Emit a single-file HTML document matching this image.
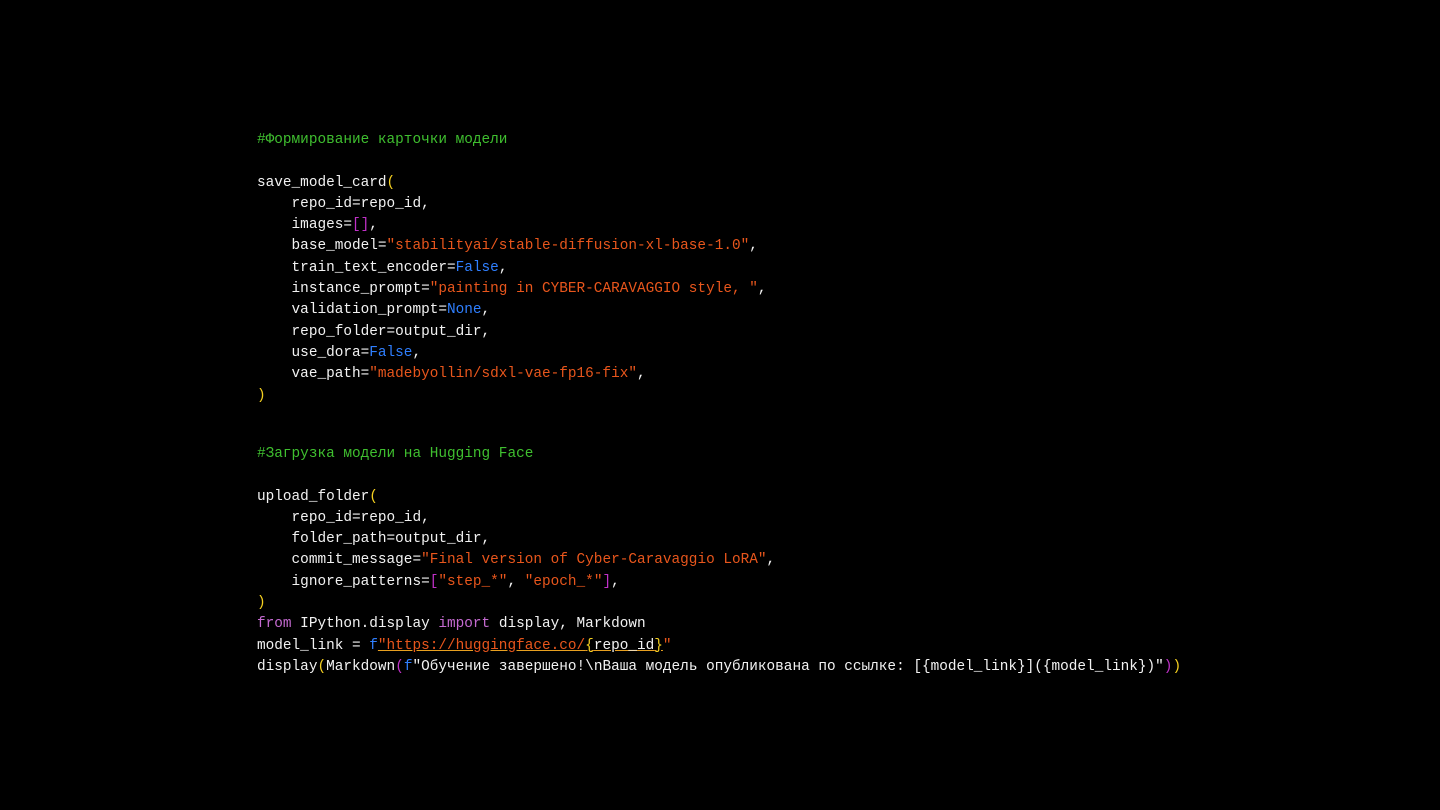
<!DOCTYPE html>
<html><head><meta charset="utf-8"><style>
html,body{margin:0;padding:0;background:#000;width:1440px;height:810px;overflow:hidden}
pre{position:absolute;left:257px;margin:0;font-family:"Liberation Mono","DejaVu Sans Mono",monospace;font-size:14.4px;line-height:21.3px;color:#f2f2f2;white-space:pre}
.c{color:#3fbf2f}.s{color:#e8561c}.k{color:#2f7fff}.y{color:#f5d020}.p{color:#c030c8}.m{color:#c46ad0}
.u{text-decoration:underline;text-decoration-color:#e8a020}
</style></head><body>
<pre style="top:130px"><span class="c">#Формирование карточки модели</span>

save_model_card<span class="y">(</span>
    repo_id=repo_id,
    images=<span class="p">[]</span>,
    base_model=<span class="s">"stabilityai/stable-diffusion-xl-base-1.0"</span>,
    train_text_encoder=<span class="k">False</span>,
    instance_prompt=<span class="s">"painting in CYBER-CARAVAGGIO style, "</span>,
    validation_prompt=<span class="k">None</span>,
    repo_folder=output_dir,
    use_dora=<span class="k">False</span>,
    vae_path=<span class="s">"madebyollin/sdxl-vae-fp16-fix"</span>,
<span class="y">)</span></pre>
<pre style="top:444px"><span class="c">#Загрузка модели на Hugging Face</span>

upload_folder<span class="y">(</span>
    repo_id=repo_id,
    folder_path=output_dir,
    commit_message=<span class="s">"Final version of Cyber-Caravaggio LoRA"</span>,
    ignore_patterns=<span class="p">[</span><span class="s">"step_*"</span>, <span class="s">"epoch_*"</span><span class="p">]</span>,
<span class="y">)</span>
<span class="m">from</span> IPython.display <span class="m">import</span> display, Markdown
model_link = <span class="k">f</span><span class="u"><span class="s">"https://huggingface.co/</span><span class="y">{</span>repo_id<span class="y">}</span></span><span class="s">"</span>
display<span class="y">(</span>Markdown<span class="p">(</span><span class="k">f</span>"Обучение завершено!\nВаша модель опубликована по ссылке: [{model_link}]({model_link})"<span class="p">)</span><span class="y">)</span></pre>
</body></html>
